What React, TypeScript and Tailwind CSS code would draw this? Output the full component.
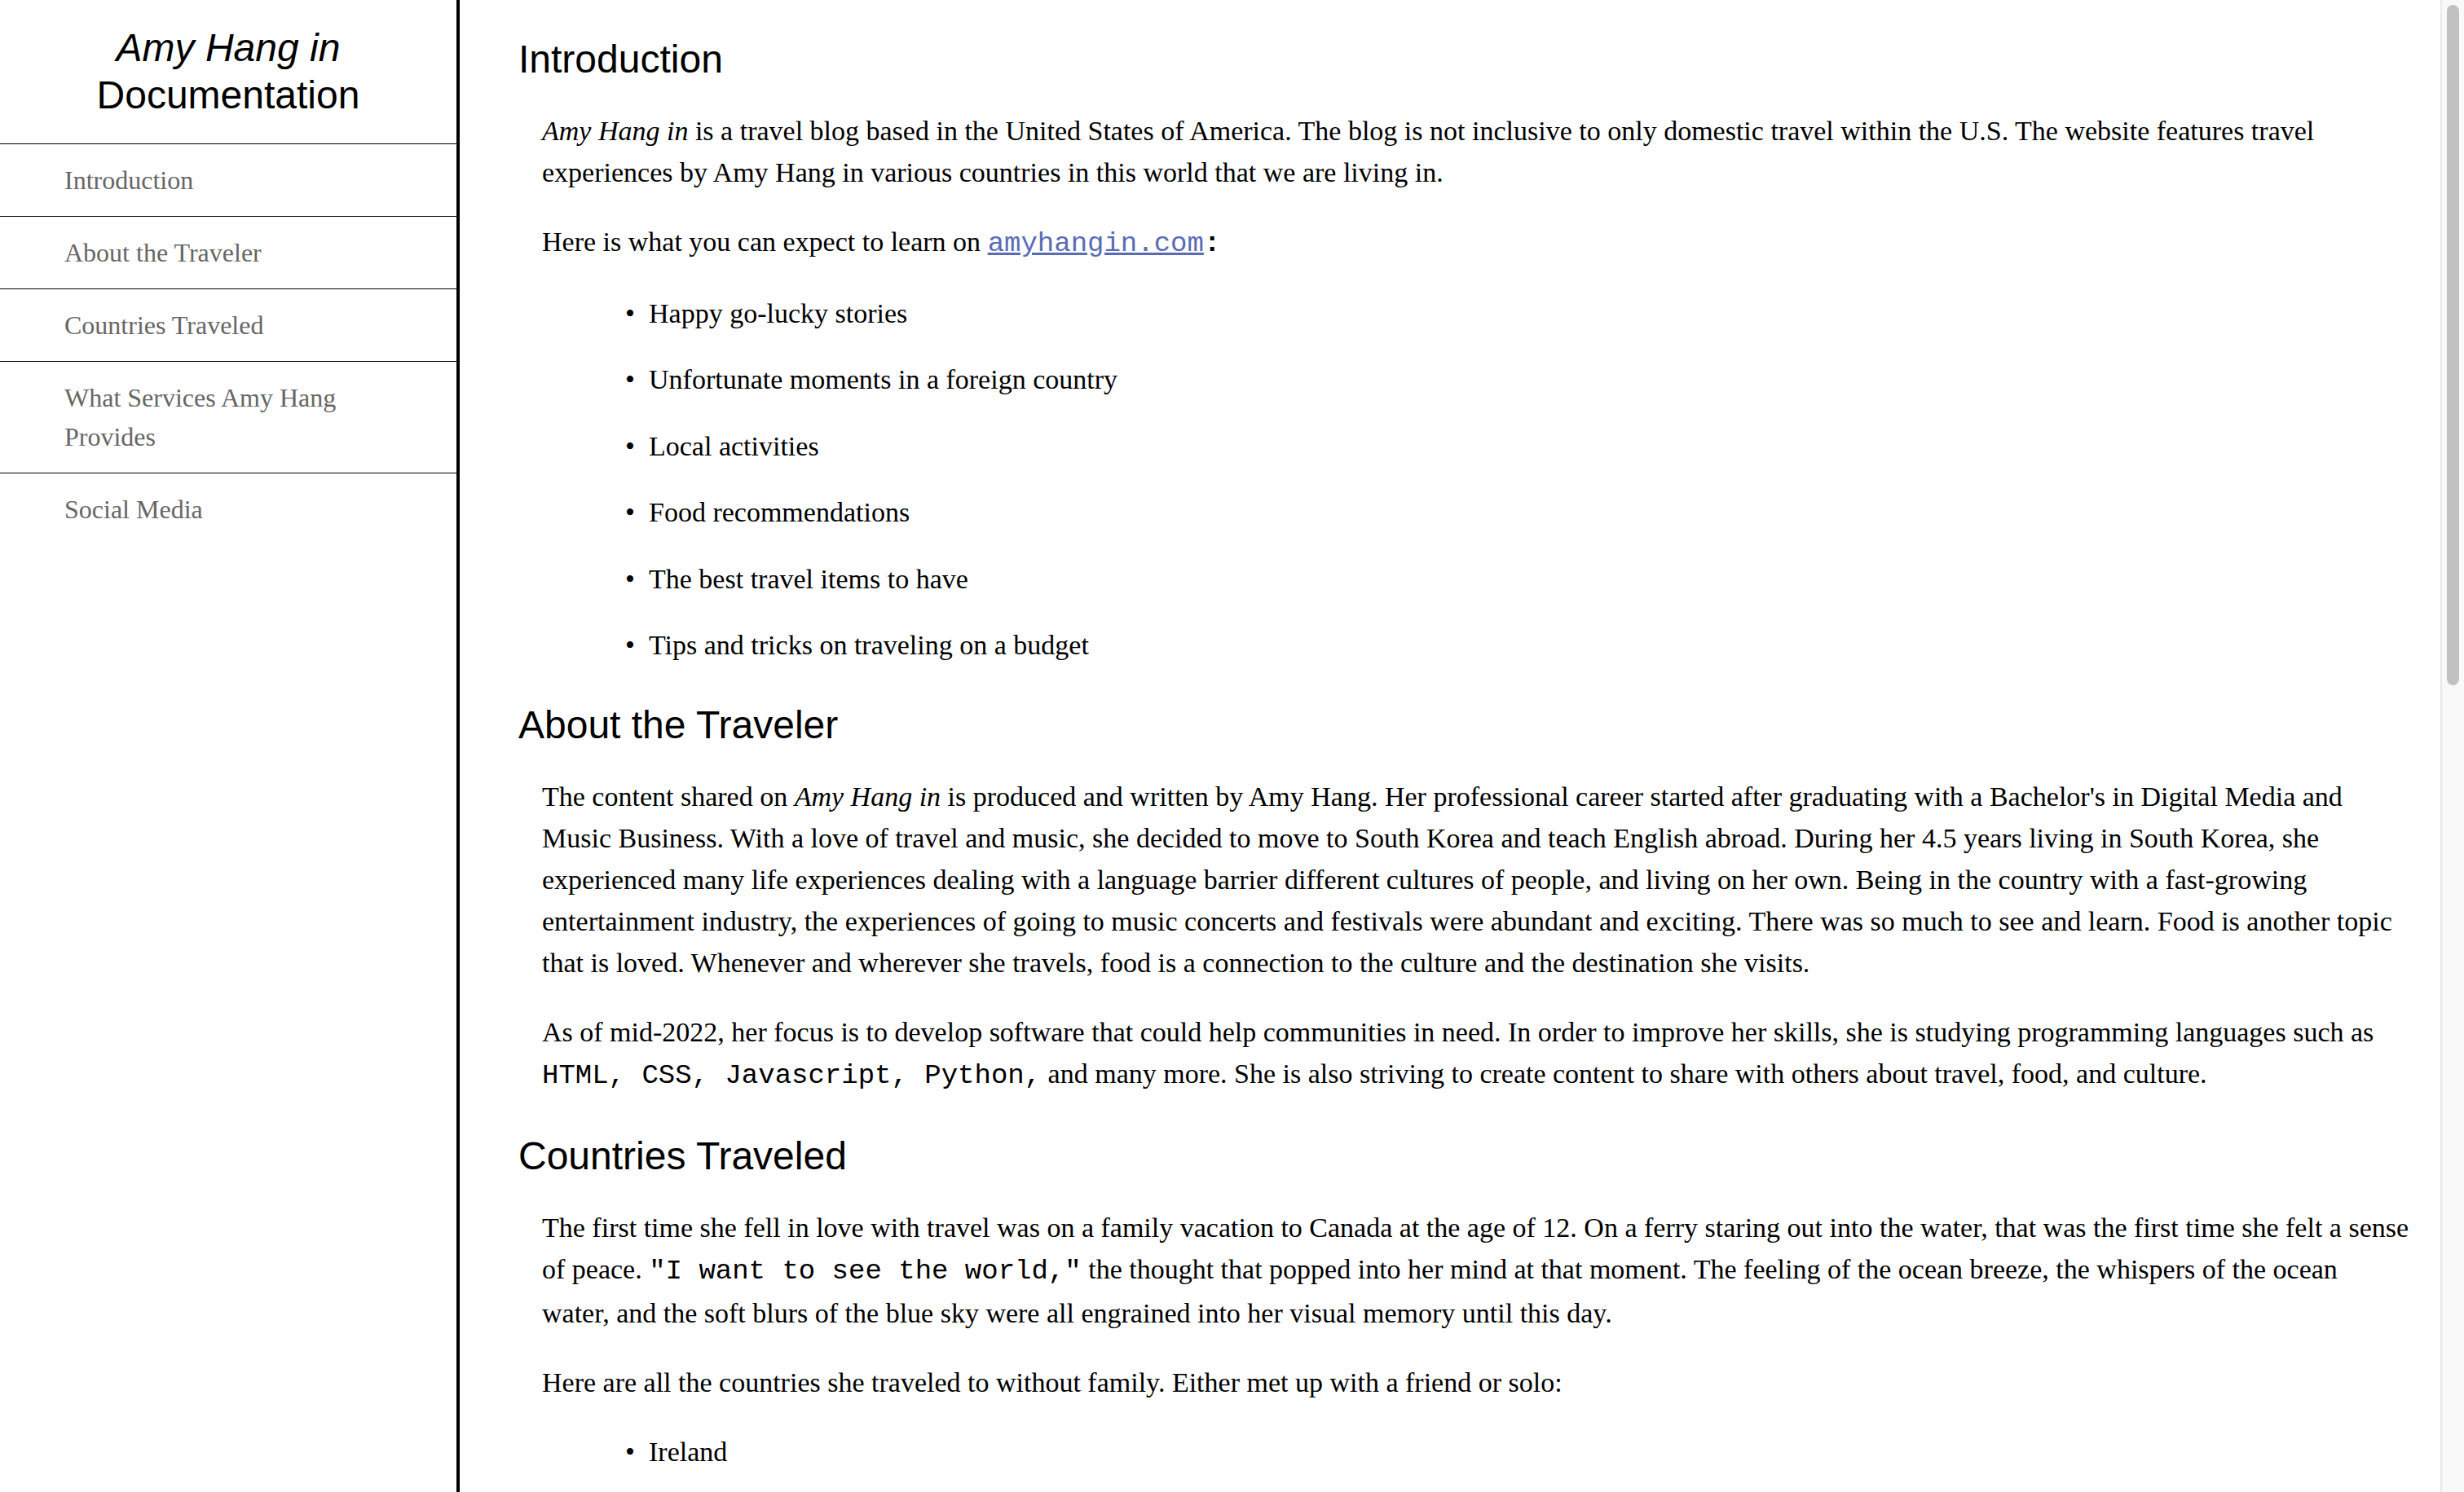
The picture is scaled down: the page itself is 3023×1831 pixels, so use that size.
import React from 'react';

const NAV_LINKS = [
  'Introduction',
  'About the Traveler',
  'Countries Traveled',
  'What Services Amy Hang Provides',
  'Social Media',
];

const LEARN_ITEMS = [
  'Happy go-lucky stories',
  'Unfortunate moments in a foreign country',
  'Local activities',
  'Food recommendations',
  'The best travel items to have',
  'Tips and tricks on traveling on a budget',
];

const COUNTRIES = ['Ireland'];

const serif = "font-['Liberation_Serif','Times_New_Roman',serif]";
const mono = "font-['Liberation_Mono','Courier_New',monospace]";

function Heading({ children }: { children: React.ReactNode }) {
  return (
    <h2 className="pt-[11px] mb-[35px] font-['Liberation_Sans',Arial,sans-serif] text-[48px] leading-[55px] font-normal text-black">
      {children}
    </h2>
  );
}

function Para({ children }: { children: React.ReactNode }) {
  return <p className="pl-[29px] mb-[34px] text-[34px] leading-[51px] text-black">{children}</p>;
}

function Bullets({ items }: { items: string[] }) {
  return (
    <ul className="pl-[131px] mb-[34px] flex flex-col gap-[30px] text-[34px] leading-[51.4px] text-black">
      {items.map((item) => (
        <li key={item} className="flex">
          <span className="w-[29px] shrink-0">•</span>
          <span>{item}</span>
        </li>
      ))}
    </ul>
  );
}

export default function App() {
  return (
    <div className="flex h-[1831px] w-full overflow-hidden bg-white">
      {/* Sidebar */}
      <nav className="w-[564px] shrink-0 border-r-4 border-black flex flex-col">
        <header className="h-[177px] border-b border-black flex items-center justify-center pb-[1px]">
          <h1 className="text-center font-['Liberation_Sans',Arial,sans-serif] text-[48px] leading-[58px] font-normal text-black">
            <i>Amy Hang in</i>
            <br />
            Documentation
          </h1>
        </header>
        <ul className={serif}>
          {NAV_LINKS.map((link) => (
            <li key={link} className="border-b border-black last:border-b-0">
              <a
                href={'#' + link.replace(/ /g, '_')}
                className="block pl-[79px] pr-[79px] pt-[20px] pb-[20px] text-[32px] leading-[48px] text-[#666666]"
              >
                {link}
              </a>
            </li>
          ))}
        </ul>
      </nav>

      {/* Main documentation */}
      <main className={`flex-1 overflow-hidden pl-[72px] pr-[15px] pt-[34px] ${serif}`}>
        <section id="Introduction">
          <Heading>Introduction</Heading>
          <Para>
            <i>Amy Hang in</i> is a travel blog based in the United States of America. The blog is not inclusive to
            only domestic travel within the U.S. The website features travel
            <br />
            experiences by Amy Hang in various countries in this world that we are living in.
          </Para>
          <Para>
            Here is what you can expect to learn on{' '}
            <a href="#" className={`${mono} text-[#5a6bb5] underline`}>
              amyhangin.com
            </a>
            <code className={`${mono} font-bold`}>:</code>
          </Para>
          <Bullets items={LEARN_ITEMS} />
        </section>

        <section id="About_the_Traveler">
          <Heading>About the Traveler</Heading>
          <Para>
            The content shared on <i>Amy Hang in</i> is produced and written by Amy Hang. Her professional career
            started after graduating with a Bachelor's in Digital Media and
            <br />
            Music Business. With a love of travel and music, she decided to move to South Korea and teach English
            abroad. During her 4.5 years living in South Korea, she
            <br />
            experienced many life experiences dealing with a language barrier different cultures of people, and living
            on her own. Being in the country with a fast-growing
            <br />
            entertainment industry, the experiences of going to music concerts and festivals were abundant and
            exciting. There was so much to see and learn. Food is another topic
            <br />
            that is loved. Whenever and wherever she travels, food is a connection to the culture and the destination
            she visits.
          </Para>
          <Para>
            As of mid-2022, her focus is to develop software that could help communities in need. In order to improve
            her skills, she is studying programming languages such as
            <br />
            <code className={mono}>HTML, CSS, Javascript, Python,</code> and many more. She is also striving to create
            content to share with others about travel, food, and culture.
          </Para>
        </section>

        <section id="Countries_Traveled">
          <Heading>Countries Traveled</Heading>
          <Para>
            The first time she fell in love with travel was on a family vacation to Canada at the age of 12. On a ferry
            staring out into the water, that was the first time she felt a sense
            <br />
            of peace. <code className={mono}>"I want to see the world,"</code> the thought that popped into her mind at
            that moment. The feeling of the ocean breeze, the whispers of the ocean
            <br />
            water, and the soft blurs of the blue sky were all engrained into her visual memory until this day.
          </Para>
          <Para>Here are all the countries she traveled to without family. Either met up with a friend or solo:</Para>
          <Bullets items={COUNTRIES} />
        </section>
      </main>

      {/* Window scrollbar */}
      <div className="w-[29px] shrink-0 border-l-2 border-[#e8e8e8] bg-[#f9f9f9] flex justify-center pt-[6px]">
        <div className="w-[15px] h-[835px] rounded-full bg-[#c1c1c1]" />
      </div>
    </div>
  );
}
